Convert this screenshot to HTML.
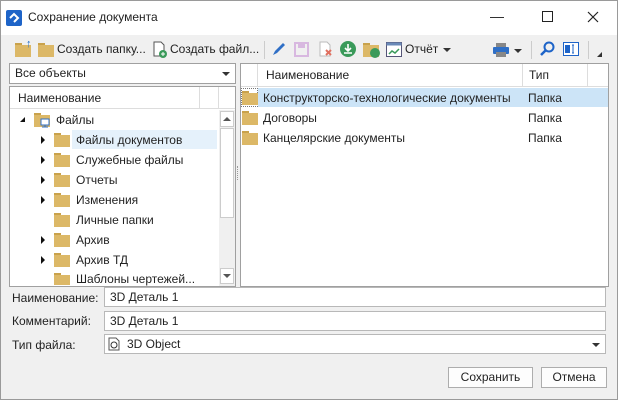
<!DOCTYPE html>
<html><head><meta charset="utf-8"><style>
*{box-sizing:border-box;margin:0;padding:0}
body{width:618px;height:400px;overflow:hidden;background:#f0f0f0;font-family:"Segoe UI","Liberation Sans","DejaVu Sans",sans-serif;font-size:12px;color:#222;position:relative}
.win{position:absolute;left:0;top:0;width:618px;height:400px;border:1px solid #9a9a9a}
.abs{position:absolute}
.title{left:1px;top:1px;width:616px;height:34px;background:#fff}
.fold{position:absolute;width:16px;height:12px;background:#dcb867}
.fold:before{content:"";position:absolute;left:0;top:-2px;width:7px;height:2px;background:#c9a24c}
.box{background:#fff;border:1px solid #a0a0a0}
.t{position:absolute;white-space:nowrap}
.arr{position:absolute;width:0;height:0;border-top:4px solid transparent;border-bottom:4px solid transparent;border-left:4px solid #111}
.inp{position:absolute;background:#fff;border:1px solid #b8b8b8;height:20px;left:104px;width:502px;padding:2px 5px}
.btn{position:absolute;background:#fdfdfd;border:1px solid #adadad;height:21px;text-align:center;line-height:19px}
</style></head><body>
<div class="win"></div>
<div class="abs title"></div>
<svg class="abs" style="left:6px;top:10px" width="16" height="16"><rect x="0" y="0" width="16" height="16" rx="2" fill="#1e64c8"/><path d="M4 8l4-4 4 4-4 4" fill="none" stroke="#fff" stroke-width="2"/></svg>
<div class="t" style="left:28px;top:10px;font-size:12px">Сохранение документа</div>
<div class="t" style="left:490px;top:8px;font-size:14px">—</div>
<div class="abs" style="left:542px;top:11px;width:11px;height:11px;border:1px solid #222"></div>
<svg class="abs" style="left:587px;top:11px" width="12" height="12"><path d="M1 1l10 10M11 1L1 11" stroke="#222" stroke-width="1.2"/></svg>

<!-- toolbar -->
<div class="fold" style="left:15px;top:45px"></div><div class="t" style="left:26px;top:38px;color:#1e6cc8;font-size:11px">↑</div>
<div class="fold" style="left:38px;top:45px"></div>
<div class="t" style="left:57px;top:42px">Создать папку...</div>
<svg class="abs" style="left:152px;top:41px" width="16" height="17"><path d="M2 1h7l3 3v11H2z" fill="#fff" stroke="#555"/><circle cx="11" cy="13" r="4" fill="#3a9a5a"/><path d="M11 11v4M9 13h4" stroke="#fff"/></svg>
<div class="t" style="left:170px;top:42px">Создать файл...</div>
<div class="abs" style="left:264px;top:41px;width:1px;height:18px;background:#ccc"></div>
<svg class="abs" style="left:271px;top:41px" width="16" height="16"><path d="M2 14l2-4 8-8 2 2-8 8z" fill="#2f6fc6"/></svg>
<svg class="abs" style="left:294px;top:42px" width="15" height="15"><rect x="1" y="1" width="13" height="13" fill="none" stroke="#d8b8e0" stroke-width="2"/><rect x="4" y="2" width="7" height="4" fill="#d8b8e0"/></svg>
<svg class="abs" style="left:318px;top:41px" width="16" height="16"><path d="M2 1h7l3 3v11H2z" fill="#fff" stroke="#bbb"/><path d="M8 9l5 5M13 9l-5 5" stroke="#e07060" stroke-width="2"/></svg>
<svg class="abs" style="left:340px;top:41px" width="16" height="16"><circle cx="8" cy="8" r="8" fill="#3a9a5a"/><path d="M8 3v7M5 7l3 3 3-3M4 12h8" stroke="#fff" stroke-width="1.6" fill="none"/></svg>
<div class="fold" style="left:363px;top:45px"></div><svg class="abs" style="left:370px;top:48px" width="10" height="10"><circle cx="5" cy="5" r="5" fill="#3a9a5a"/></svg>
<svg class="abs" style="left:386px;top:42px" width="16" height="15"><rect x="0.5" y="0.5" width="15" height="14" fill="#fff" stroke="#557"/><rect x="0.5" y="0.5" width="15" height="3" fill="#6a8ab8"/><path d="M3 12l3-3 3 2 4-4" stroke="#3a9a5a" fill="none" stroke-width="1.5"/></svg>
<div class="t" style="left:405px;top:42px">Отчёт</div>
<div class="abs" style="left:443px;top:48px;border-left:4px solid transparent;border-right:4px solid transparent;border-top:4px solid #333"></div>
<svg class="abs" style="left:492px;top:42px" width="18" height="16"><rect x="4" y="1" width="10" height="4" fill="#888"/><rect x="1" y="5" width="16" height="7" rx="1" fill="#2f6fc6"/><rect x="4" y="10" width="10" height="5" fill="#888"/></svg>
<div class="abs" style="left:514px;top:49px;border-left:4px solid transparent;border-right:4px solid transparent;border-top:4px solid #333"></div>
<div class="abs" style="left:531px;top:41px;width:1px;height:18px;background:#ccc"></div>
<svg class="abs" style="left:539px;top:41px" width="16" height="16"><circle cx="10" cy="6" r="4.5" fill="none" stroke="#1e64c8" stroke-width="2"/><path d="M7 9l-5 5" stroke="#1e64c8" stroke-width="2.5"/></svg>
<svg class="abs" style="left:563px;top:42px" width="16" height="14"><rect x="0.5" y="0.5" width="15" height="13" fill="#fff" stroke="#1e64c8"/><rect x="2" y="3" width="5" height="8" fill="#1e64c8"/><path d="M10 3v8M9 3h2M9 11h2" stroke="#1e64c8"/></svg>
<div class="abs" style="left:588px;top:41px;width:1px;height:18px;background:#ccc"></div>
<div class="abs" style="left:597px;top:52px;border-left:5px solid transparent;border-bottom:5px solid #333"></div>

<!-- left combo -->
<div class="abs box" style="left:9px;top:63px;width:227px;height:21px"></div>
<div class="t" style="left:15px;top:66px">Все объекты</div>
<div class="abs" style="left:222px;top:72px;border-left:4px solid transparent;border-right:4px solid transparent;border-top:4px solid #333"></div>

<!-- tree -->
<div class="abs box" style="left:9px;top:86px;width:227px;height:201px"></div>
<div class="abs" style="left:10px;top:87px;width:225px;height:22px;background:#fff;border-bottom:1px solid #ddd"></div>
<div class="abs" style="left:199px;top:87px;width:1px;height:22px;background:#ddd"></div>
<div class="abs" style="left:218px;top:87px;width:1px;height:22px;background:#ddd"></div>
<div class="t" style="left:18px;top:91px">Наименование</div>
<div class="abs" style="left:219px;top:110px;width:16px;height:176px;background:#f0f0f0"></div>
<div class="abs" style="left:220px;top:111px;width:14px;height:16px;background:#fff;border:1px solid #ccc"></div>
<div class="abs" style="left:223px;top:117px;border-left:4px solid transparent;border-right:4px solid transparent;border-bottom:4px solid #555"></div>
<div class="abs" style="left:220px;top:128px;width:14px;height:90px;background:#fff;border:1px solid #ccc"></div>
<div class="abs" style="left:220px;top:268px;width:14px;height:16px;background:#fff;border:1px solid #ccc"></div>
<div class="abs" style="left:223px;top:274px;border-left:4px solid transparent;border-right:4px solid transparent;border-top:4px solid #555"></div>
<div class="abs" style="left:72px;top:130px;width:145px;height:19px;background:#e5f1fb"></div>
<div class="abs" style="left:20px;top:117px;border-left:5px solid transparent;border-bottom:5px solid #111"></div>
<div class="fold" style="left:34px;top:115px"></div>
<svg class="abs" style="left:40px;top:118px" width="10" height="10"><rect x="1" y="1" width="8" height="6" fill="#fff" stroke="#2f6fc6"/><path d="M5 7v2M2 9h6" stroke="#2f6fc6"/></svg>
<div class="t" style="left:56px;top:113px">Файлы</div>
<div class="arr" style="left:41px;top:136px"></div><div class="fold" style="left:54px;top:135px"></div><div class="t" style="left:76px;top:133px">Файлы документов</div>
<div class="arr" style="left:41px;top:156px"></div><div class="fold" style="left:54px;top:155px"></div><div class="t" style="left:76px;top:153px">Служебные файлы</div>
<div class="arr" style="left:41px;top:176px"></div><div class="fold" style="left:54px;top:175px"></div><div class="t" style="left:76px;top:173px">Отчеты</div>
<div class="arr" style="left:41px;top:196px"></div><div class="fold" style="left:54px;top:195px"></div><div class="t" style="left:76px;top:193px">Изменения</div>
<div class="fold" style="left:54px;top:215px"></div><div class="t" style="left:76px;top:213px">Личные папки</div>
<div class="arr" style="left:41px;top:236px"></div><div class="fold" style="left:54px;top:235px"></div><div class="t" style="left:76px;top:233px">Архив</div>
<div class="arr" style="left:41px;top:256px"></div><div class="fold" style="left:54px;top:255px"></div><div class="t" style="left:76px;top:253px">Архив ТД</div>
<div class="fold" style="left:54px;top:275px;height:10px"></div>
<div class="abs" style="left:10px;top:273px;width:209px;height:13px;overflow:hidden"><div class="t" style="left:66px;top:-1px">Шаблоны чертежей...</div></div>

<!-- splitter dots -->
<div class="abs" style="left:237px;top:166px;width:1px;height:14px;border-left:1px dotted #999"></div>

<!-- right list -->
<div class="abs box" style="left:240px;top:63px;width:369px;height:224px"></div>
<div class="abs" style="left:241px;top:64px;width:367px;height:23px;border-bottom:1px solid #ddd"></div>
<div class="abs" style="left:257px;top:64px;width:1px;height:23px;background:#ddd"></div>
<div class="abs" style="left:522px;top:64px;width:1px;height:23px;background:#ddd"></div>
<div class="abs" style="left:587px;top:64px;width:1px;height:23px;background:#ddd"></div>
<div class="t" style="left:266px;top:68px">Наименование</div>
<div class="t" style="left:529px;top:68px">Тип</div>
<div class="abs" style="left:258px;top:88px;width:350px;height:19px;background:#cce4f7"></div>
<div class="abs" style="left:241px;top:88px;width:17px;height:19px;border:1px dotted #777"></div>
<div class="fold" style="left:242px;top:93px"></div><div class="t" style="left:263px;top:91px">Конструкторско-технологические документы</div><div class="t" style="left:528px;top:91px">Папка</div>
<div class="fold" style="left:242px;top:113px"></div><div class="t" style="left:263px;top:111px">Договоры</div><div class="t" style="left:528px;top:111px">Папка</div>
<div class="fold" style="left:242px;top:133px"></div><div class="t" style="left:263px;top:131px">Канцелярские документы</div><div class="t" style="left:528px;top:131px">Папка</div>

<!-- fields -->
<div class="t" style="left:12px;top:291px">Наименование:</div>
<div class="inp" style="top:287px">3D Деталь 1</div>
<div class="t" style="left:12px;top:314px">Комментарий:</div>
<div class="inp" style="top:311px">3D Деталь 1</div>
<div class="t" style="left:12px;top:338px">Тип файла:</div>
<div class="inp" style="top:334px;padding-left:22px">3D Object</div>
<svg class="abs" style="left:108px;top:337px" width="12" height="14"><path d="M1 1h7l3 3v9H1z" fill="#fff" stroke="#555"/><circle cx="6" cy="8" r="3" fill="none" stroke="#333"/></svg>
<div class="abs" style="left:592px;top:343px;border-left:4px solid transparent;border-right:4px solid transparent;border-top:4px solid #333"></div>

<div class="btn" style="left:448px;top:367px;width:85px">Сохранить</div>
<div class="btn" style="left:541px;top:367px;width:66px">Отмена</div>
</body></html>
